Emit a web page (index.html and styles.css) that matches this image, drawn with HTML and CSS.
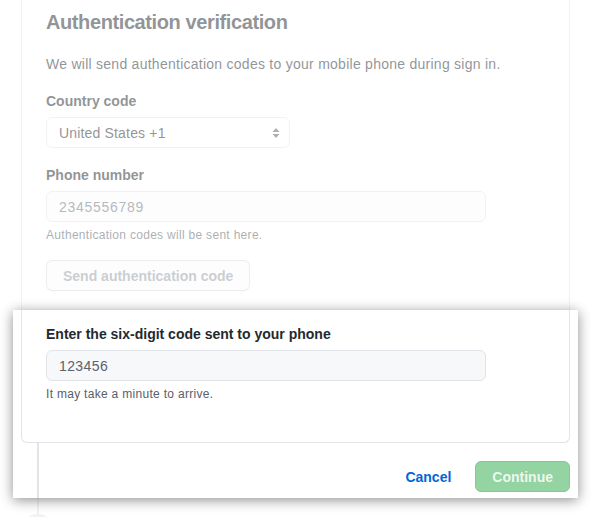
FILE: index.html
```html
<!DOCTYPE html>
<html lang="en">
<head>
<meta charset="utf-8">
<title>Authentication verification</title>
<link rel="stylesheet" href="styles.css">
</head>
<body>
<div class="page">
  <div class="card">
    <h2 class="title">Authentication verification</h2>
    <p class="desc">We will send authentication codes to your mobile phone during sign in.</p>
    <div class="group group-country">
      <label class="label">Country code</label>
      <div class="select">
        <span class="select-text">United States +1</span>
        <svg class="select-arrows" width="8" height="10" viewBox="0 0 8 10"><polygon points="4,0 7.5,4 0.5,4" fill="#586069"/><polygon points="0.5,6 7.5,6 4,10" fill="#586069"/></svg>
      </div>
    </div>
    <div class="group group-phone">
      <label class="label">Phone number</label>
      <input class="input input-phone" type="text" placeholder="2345556789">
      <p class="note">Authentication codes will be sent here.</p>
    </div>
    <button class="btn btn-send" type="button" disabled>Send authentication code</button>
    <div class="group group-code">
      <label class="label">Enter the six-digit code sent to your phone</label>
      <input class="input input-code" type="text" value="123456">
      <p class="note">It may take a minute to arrive.</p>
    </div>
  </div>
  <div class="below">
    <div class="timeline">
      <div class="tl-line"></div>
      <div class="tl-badge"></div>
    </div>
    <div class="actions">
      <button class="btn-link" type="button">Cancel</button>
      <button class="btn btn-primary" type="button">Continue</button>
    </div>
  </div>
</div>
<div class="spotlight"></div>
</body>
</html>
```

FILE: styles.css
```css
html, body {
  margin: 0;
  padding: 0;
  background: #ffffff;
  overflow: hidden;
}

body {
  font-family: "Liberation Sans", Arial, sans-serif;
  font-size: 14px;
  line-height: 20px;
  color: #24292e;
}

.page {
  padding-left: 21px;
}

.card {
  width: 549px;
  box-sizing: border-box;
  border: 1px solid #e1e4e8;
  border-top: none;
  border-radius: 0 0 6px 6px;
  padding: 7px 24px 39px;
}

.title {
  margin: 0 0 17px;
  font-size: 20px;
  line-height: 30px;
  font-weight: 700;
  letter-spacing: -0.4px;
  color: #24292e;
}

.desc {
  margin: 0 0 16px;
  font-size: 14px;
  line-height: 21px;
  letter-spacing: 0.26px;
  color: #24292e;
}

.group {
  display: flex;
  flex-direction: column;
  align-items: flex-start;
}

.group-country {
  margin-bottom: 17px;
}

.group-phone {
  margin-bottom: 16px;
}

.group-code {
  margin-top: 33px;
}

.label {
  display: block;
  margin-bottom: 6px;
  font-weight: 700;
  font-size: 14px;
  line-height: 20px;
  color: #24292e;
}

.select {
  width: 244px;
  height: 31px;
  box-sizing: border-box;
  border: 1px solid #e1e4e8;
  border-radius: 6px;
  background: #ffffff;
  display: flex;
  align-items: center;
  justify-content: space-between;
  padding: 0 9px 0 12px;
}

.select-text {
  letter-spacing: 0.17px;
  color: #24292e;
}

.select-arrows {
  display: block;
}

.input {
  width: 440px;
  height: 31px;
  box-sizing: border-box;
  margin: 0;
  padding: 0 12px;
  border: 1px solid #e1e4e8;
  border-radius: 6px;
  background: #fafbfc;
  font-family: inherit;
  font-size: 14px;
  color: #24292e;
  outline: none;
}

.input-phone {
  letter-spacing: 0.7px;
}

.input-phone::placeholder {
  color: #6a737d;
}

.input-code {
  background: #f6f8fa;
  letter-spacing: 0.4px;
  color: #5a626b;
}

.note {
  margin: 4px 0 0;
  font-size: 12px;
  line-height: 18px;
  letter-spacing: 0.3px;
  color: #586069;
}

.btn {
  height: 31px;
  box-sizing: border-box;
  margin: 0;
  padding: 0 16px;
  border-radius: 6px;
  font-family: inherit;
  font-size: 14px;
  font-weight: 700;
  line-height: 20px;
}

.btn-send {
  display: block;
  border: 1px solid rgba(27, 31, 35, 0.15);
  background: #fafbfc;
  color: #959da5;
}

.below {
  width: 549px;
  display: flex;
  justify-content: space-between;
  align-items: flex-start;
}

.timeline {
  display: flex;
  flex-direction: column;
  align-items: flex-start;
}

.tl-line {
  width: 2px;
  height: 71px;
  margin-left: 16px;
  background: #e1e4e8;
}

.tl-badge {
  width: 32px;
  height: 32px;
  margin-left: 1px;
  border-radius: 50%;
  background: #e1e4e8;
}

.actions {
  margin-top: 18px;
  display: flex;
  align-items: center;
  gap: 8px;
}

.btn-link {
  height: 31px;
  margin: 0;
  padding: 0 16px;
  border: none;
  background: transparent;
  font-family: inherit;
  font-size: 14px;
  font-weight: 700;
  color: #0366d6;
}

.btn-primary {
  border: 1px solid #86c894;
  background: #94d3a2;
  color: rgba(255, 255, 255, 0.85);
}

.spotlight {
  position: absolute;
  left: 13px;
  top: 310px;
  width: 565px;
  height: 188px;
  box-shadow: 0 2px 12px rgba(0, 0, 0, 0.45), 0 0 0 3000px rgba(255, 255, 255, 0.5);
  pointer-events: none;
}
```
